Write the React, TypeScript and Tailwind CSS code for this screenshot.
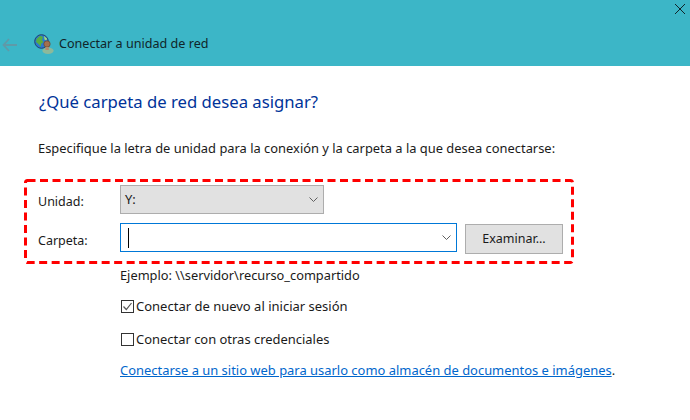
const GlobeIcon = () => (
  <svg width="20" height="20" viewBox="0 0 20 20" className="shrink-0">
    <circle cx="7.5" cy="7.5" r="6.8" fill="#2a7ad0" stroke="#23406f" strokeWidth="1" />
    <path d="M2.5 5 6 1.8 9 2.8 8 6 9.5 8 7 10 7 13 5 10.5 2 8Z" fill="#58ad42" />
    <path d="M10 2 13 4.5 12.5 6.5 10.5 5.5Z" fill="#a4dc7c" />
    <ellipse cx="14" cy="16.8" rx="5.6" ry="3.2" fill="#8db99a" />
    <circle cx="13" cy="10" r="3.2" fill="#a3704e" stroke="#5e3d2a" strokeWidth="0.6" />
    <path d="M11.4 13h3.4v3h-3.4Z" fill="#b48a6c" />
  </svg>
);

const Chevron = () => (
  <svg width="9" height="5" viewBox="0 0 9 5" className="shrink-0">
    <path d="M0.5 0.5 4.5 4.5 8.5 0.5" fill="none" stroke="#606060" strokeWidth="1" />
  </svg>
);

export default function App() {
  return (
    <div className="flex h-[420px] w-[690px] flex-col overflow-hidden bg-white font-['Noto_Sans','Open_Sans',sans-serif] text-[12.9px] text-[#1a1a1a]">
      {/* title bar */}
      <div className="relative flex h-[66px] shrink-0 items-end bg-[#3cb6c7] pb-[12px] pl-[2px]">
        <svg width="16" height="14" viewBox="0 0 16 14" className="mb-[2px] shrink-0">
          <path d="M7 1 1.5 7 7 13M1.5 7H15" fill="none" stroke="#5f9aa8" strokeWidth="1.8" />
        </svg>
        <div className="ml-[16px]"><GlobeIcon /></div>
        <span className="ml-[5px] text-[12.6px] text-[#10252a]">Conectar a unidad de red</span>
        <svg width="10" height="10" viewBox="0 0 10 10" className="absolute right-[5px] top-[4px]">
          <path d="M0 0 10 10M10 0 0 10" stroke="#10252a" strokeWidth="1" />
        </svg>
      </div>

      <div className="flex flex-col pl-[39px] pt-[25px]">
        <h1 className="text-[16.7px] leading-[22px] text-[#003399]">¿Qué carpeta de red desea asignar?</h1>
        <p className="-ml-px mt-[26px] leading-[18px]">Especifique la letra de unidad para la conexión y la carpeta a la que desea conectarse:</p>

        {/* highlighted fields */}
        <div className="relative -ml-[15px] mt-[22px] flex h-[85px] w-[550px] flex-col pl-[15px] pt-[6px]">
          <svg width="550" height="85" viewBox="0 0 550 85" className="absolute left-0 top-0">
            <rect x="1.5" y="1.5" width="547" height="82" rx="2" fill="none" stroke="#ff0000" strokeWidth="3" strokeDasharray="8 4.5" />
          </svg>
          <div className="flex items-start">
            <span className="-ml-px mt-[8px] w-[82px] text-[12.5px]">Unidad:</span>
            <div className="flex h-[29px] w-[204px] items-center justify-between border border-[#adadad] bg-[#e1e1e1] pl-[4px] pr-[5px]">
              <span>Y:</span>
              <Chevron />
            </div>
          </div>
          <div className="mt-[9px] flex items-start">
            <span className="-ml-px mt-[9px] w-[82px] text-[12.5px]">Carpeta:</span>
            <div className="flex h-[29px] w-[337px] items-center justify-between border border-[#0078d7] pl-[7px] pr-[5px]">
              <div className="h-[20px] w-px bg-black" />
              <Chevron />
            </div>
            <button className="ml-[8px] mt-px h-[30px] w-[98px] border border-[#adadad] bg-[#e1e1e1] text-[12.5px]">Examinar...</button>
          </div>
        </div>

        <div className="ml-[81px] flex flex-col">
          <p className="mt-[2px] text-[12.8px] leading-[18px]">Ejemplo: \\servidor\recurso_compartido</p>
          <label className="mt-[13px] flex items-center gap-[2px] text-[13px] leading-[18px]">
            <span className="ml-px flex size-[13px] items-center justify-center border border-[#333333] bg-white">
              <svg width="11" height="11" viewBox="0 0 11 11">
                <path d="M1.5 5.5 4.3 8.5 9.5 2" fill="none" stroke="#555555" strokeWidth="1.2" />
              </svg>
            </span>
            Conectar de nuevo al iniciar sesión
          </label>
          <label className="mt-[15px] flex items-center gap-[2px] text-[12.95px] leading-[18px]">
            <span className="ml-px size-[13px] border border-[#333333] bg-white" />
            Conectar con otras credenciales
          </label>
          <p className="mt-[13px] text-[12.95px] leading-[18px]">
            <a className="text-[#0066cc] underline">Conectarse a un sitio web para usarlo como almacén de documentos e imágenes</a>.
          </p>
        </div>
      </div>
    </div>
  );
}
